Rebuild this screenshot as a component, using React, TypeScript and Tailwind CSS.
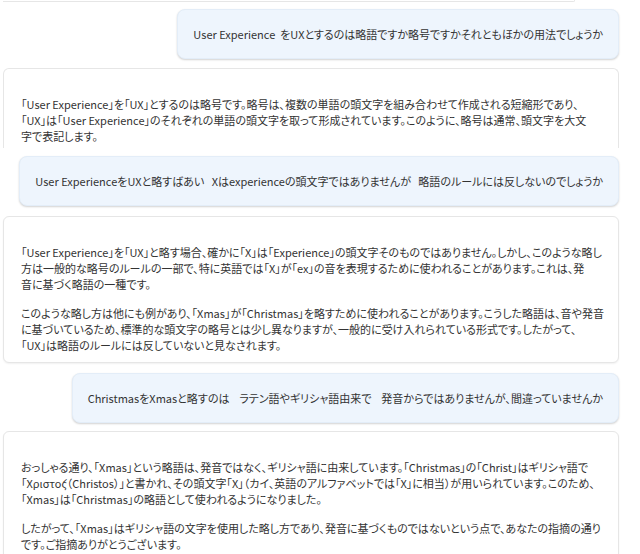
import React from "react";

const font = { fontFamily: '"Noto Sans CJK JP", "Noto Sans", sans-serif' };

function Lines({ lines }: { lines: string[] }) {
  return (
    <p className="m-0">
      {lines.map((l, i) => (
        <span key={i} className="block whitespace-nowrap">
          {l}
        </span>
      ))}
    </p>
  );
}

function UserBubble({ text, className = "" }: { text: string; className?: string }) {
  return (
    <div className={"flex justify-end " + className}>
      <div className="rounded-lg bg-[#eef5fd] border border-[#e3edf8] px-[15px] py-[16px] leading-[16px] shadow-[0_1px_2px_rgba(0,0,0,0.18)] whitespace-pre">
        {text}
      </div>
    </div>
  );
}

function Card({ paras, className = "", cut = false }: { paras: string[][]; className?: string; cut?: boolean }) {
  return (
    <div
      className={
        "bg-white border-[#e6e6e6] pl-[17px] pr-[12px] pt-[27px] " +
        (cut ? "border-x border-t rounded-t-md pb-[4px] " : "border rounded-md pb-[9px] shadow-[0_1px_2px_rgba(0,0,0,0.06)] ") +
        className
      }
    >
      <div className="flex flex-col gap-[13px]">
        {paras.map((p, i) => (
          <Lines key={i} lines={p} />
        ))}
      </div>
    </div>
  );
}

export default function App() {
  return (
    <div
      className="w-[640px] h-[554px] overflow-hidden bg-white text-[11px] leading-[16px] text-[#333333] [font-feature-settings:'palt']"
      style={font}
    >
      <div className="pl-[3px] pr-[21px]">
        <div className="w-[572px] h-[2px] border-b border-r border-[#e6e6e6] rounded-br-md" />
        <UserBubble
          className="mt-[7px]"
          text="User Experience  をUXとするのは略語ですか略号ですかそれともほかの用法でしょうか"
        />
        <Card
          className="mt-[9px]"
          cut
          paras={[
            [
              "「User Experience」を「UX」とするのは略号です。略号は、複数の単語の頭文字を組み合わせて作成される短縮形であり、",
              "「UX」は「User Experience」のそれぞれの単語の頭文字を取って形成されています。このように、略号は通常、頭文字を大文",
              "字で表記します。",
            ],
          ]}
        />
        <UserBubble
          className="mt-[8px]"
          text="User ExperienceをUXと略すばあい   Xはexperienceの頭文字ではありませんが   略語のルールには反しないのでしょうか"
        />
        <Card
          className="mt-[10px]"
          paras={[
            [
              "「User Experience」を「UX」と略す場合、確かに「X」は「Experience」の頭文字そのものではありません。しかし、このような略し",
              "方は一般的な略号のルールの一部で、特に英語では「X」が「ex」の音を表現するために使われることがあります。これは、発",
              "音に基づく略語の一種です。",
            ],
            [
              "このような略し方は他にも例があり、「Xmas」が「Christmas」を略すために使われることがあります。こうした略語は、音や発音",
              "に基づいているため、標準的な頭文字の略号とは少し異なりますが、一般的に受け入れられている形式です。したがって、",
              "「UX」は略語のルールには反していないと見なされます。",
            ],
          ]}
        />
        <UserBubble
          className="mt-[10px]"
          text="ChristmasをXmasと略すのは    ラテン語やギリシャ語由来で    発音からではありませんが、間違っていませんか"
        />
        <Card
          className="mt-[8px]"
          paras={[
            [
              "おっしゃる通り、「Xmas」という略語は、発音ではなく、ギリシャ語に由来しています。「Christmas」の「Christ」はギリシャ語で",
              "「Χριστός（Christos）」と書かれ、その頭文字「Χ」（カイ、英語のアルファベットでは「X」に相当）が用いられています。このため、",
              "「Xmas」は「Christmas」の略語として使われるようになりました。",
            ],
            [
              "したがって、「Xmas」はギリシャ語の文字を使用した略し方であり、発音に基づくものではないという点で、あなたの指摘の通り",
              "です。ご指摘ありがとうございます。",
            ],
          ]}
        />
      </div>
    </div>
  );
}
